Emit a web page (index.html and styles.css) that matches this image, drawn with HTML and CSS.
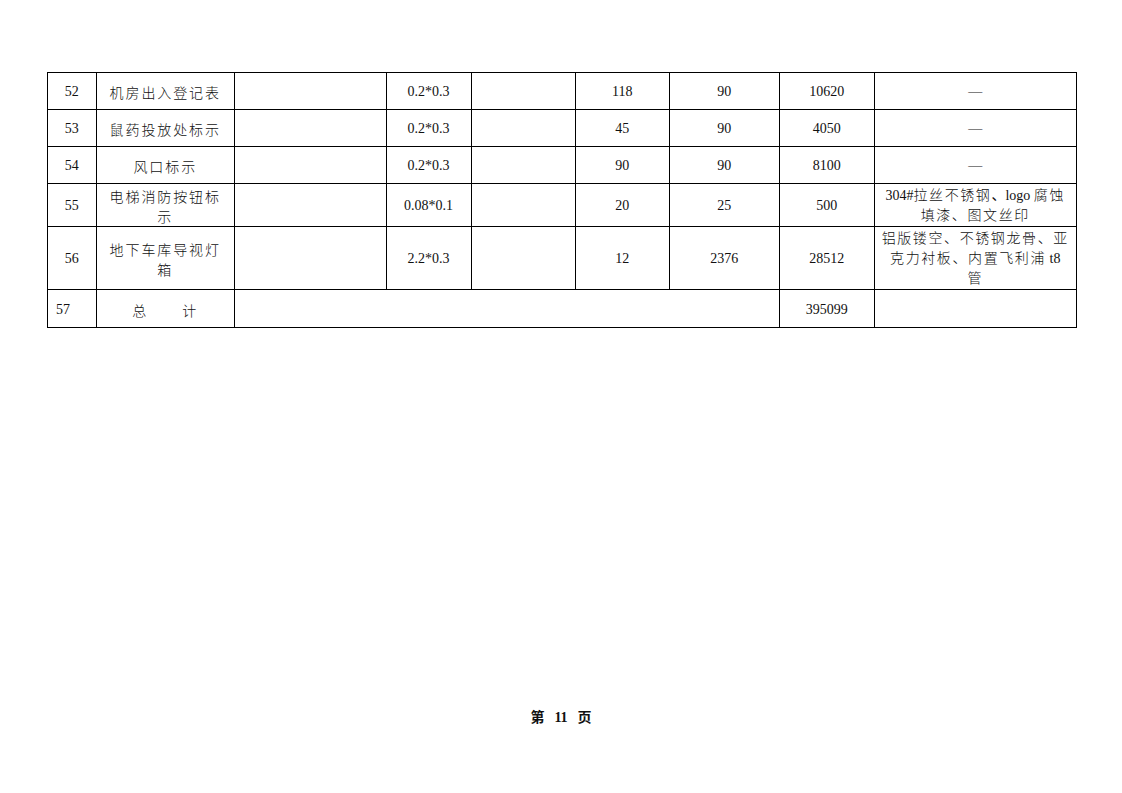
FILE: index.html
```html
<!DOCTYPE html>
<html lang="zh-CN">
<head>
<meta charset="utf-8">
<title>第 11 页</title>
<link rel="stylesheet" href="styles.css">
</head>
<body>
<div class="page">
  <table class="sheet">
    <colgroup>
      <col class="c1"><col class="c2"><col class="c3"><col class="c4"><col class="c5">
      <col class="c6"><col class="c7"><col class="c8"><col class="c9">
    </colgroup>
    <tr class="r1">
      <td>52</td><td class="cjk">机房出入登记表</td><td></td><td>0.2*0.3</td><td></td>
      <td>118</td><td>90</td><td>10620</td><td>—</td>
    </tr>
    <tr class="r1">
      <td>53</td><td class="cjk">鼠药投放处标示</td><td></td><td>0.2*0.3</td><td></td>
      <td>45</td><td>90</td><td>4050</td><td>—</td>
    </tr>
    <tr class="r1">
      <td>54</td><td class="cjk">风口标示</td><td></td><td>0.2*0.3</td><td></td>
      <td>90</td><td>90</td><td>8100</td><td>—</td>
    </tr>
    <tr class="r2">
      <td>55</td><td class="cjk">电梯消防按钮标<br>示</td><td></td><td>0.08*0.1</td><td></td>
      <td>20</td><td>25</td><td>500</td>
      <td>304#<span class="zh">拉丝不锈钢</span>、logo <span class="zh">腐蚀</span><br><span class="zh">填漆、图文丝印</span></td>
    </tr>
    <tr class="r3">
      <td>56</td><td class="cjk">地下车库导视灯<br>箱</td><td></td><td>2.2*0.3</td><td></td>
      <td>12</td><td>2376</td><td>28512</td>
      <td><span class="zh">铝版镂空、不锈钢龙骨、亚</span><br><span class="zh">克力衬板、内置飞利浦</span> t8<br><span class="zh">管</span></td>
    </tr>
    <tr class="r4">
      <td class="left">57</td><td class="cjk"><span class="sum">总</span><span class="sum">计</span></td>
      <td colspan="5"></td><td>395099</td><td></td>
    </tr>
  </table>
  <footer class="folio"><span class="fw">第</span><b class="fn">11</b><span class="fw">页</span></footer>
</div>
</body>
</html>
```

FILE: styles.css
```css
html, body {
  margin: 0;
  padding: 0;
  background: #ffffff;
}

body {
  font-family: "Liberation Serif", "Noto Sans CJK SC", serif;
  font-size: 14px;
  color: #111111;
}

.page {
  width: 1122px;
  height: 793px;
  padding: 72px 0 0 47px;
  box-sizing: border-box;
  display: flex;
  flex-direction: column;
}

.sheet {
  border-collapse: collapse;
  table-layout: fixed;
  width: 1029px;
}

.c1 { width: 48.5px; }
.c2 { width: 138.5px; }
.c3 { width: 151.5px; }
.c4 { width: 85px; }
.c5 { width: 104px; }
.c6 { width: 94.5px; }
.c7 { width: 109.5px; }
.c8 { width: 95.5px; }
.c9 { width: 201.5px; }

.sheet td {
  border: 1px solid #000000;
  text-align: center;
  vertical-align: middle;
  padding: 2px 4px 0;
  line-height: 20px;
  white-space: nowrap;
  overflow: hidden;
}

.sheet tr.r1 { height: 37px; }
.sheet tr.r2 { height: 43px; }
.sheet tr.r3 { height: 63px; }
.sheet tr.r4 { height: 38px; }

.sheet td.left {
  text-align: left;
  padding-left: 8px;
}

.sheet td.cjk {
  font-family: "Noto Sans CJK SC", "Liberation Serif", sans-serif;
  font-weight: 300;
  letter-spacing: 1.9px;
  line-height: 20px;
}

.zh {
  font-family: "Noto Sans CJK SC", sans-serif;
  font-weight: 300;
  letter-spacing: 1.6px;
  line-height: 14px;
}

.sum + .sum {
  margin-left: 34px;
}

.folio {
  margin-top: auto;
  margin-bottom: 65px;
  margin-left: -47px;
  text-align: center;
  font-weight: bold;
  font-size: 14px;
  line-height: 20px;
}

.fw {
  font-family: "Noto Sans CJK SC", sans-serif;
  font-weight: 700;
}

.fn {
  margin: 0 10px;
}
```
